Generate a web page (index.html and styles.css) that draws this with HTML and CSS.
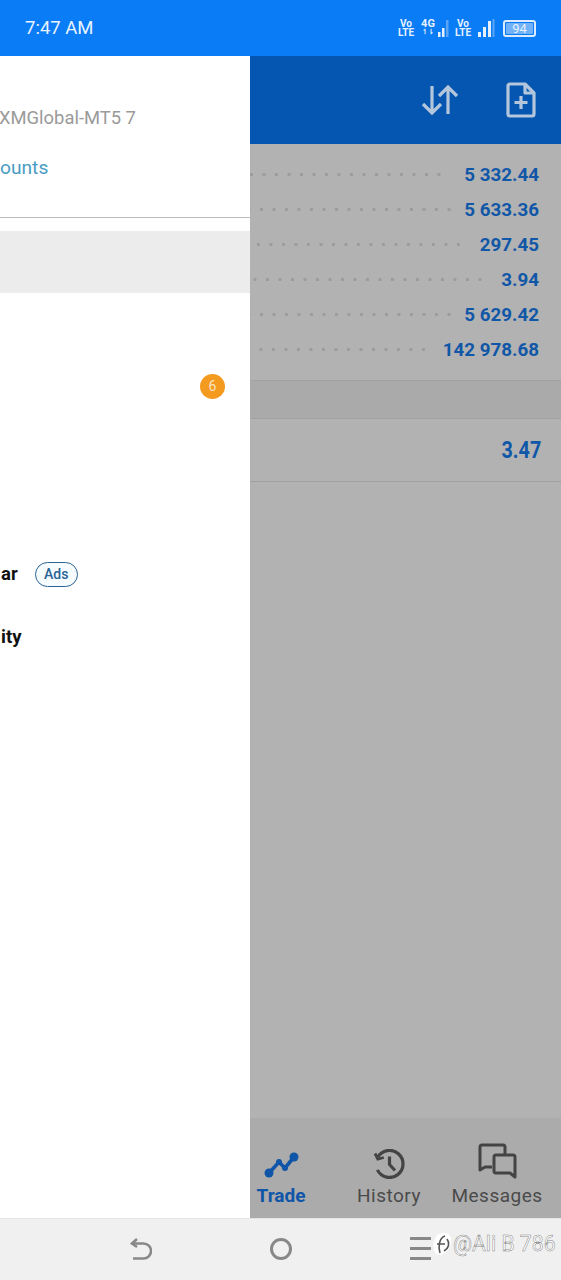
FILE: index.html
```html
<!DOCTYPE html>
<html lang="en">
<head>
    <meta charset="UTF-8">
    <meta name="viewport" content="width=device-width, initial-scale=1.0">
    <title>Trade</title>
    <link rel="stylesheet" href="styles.css">
</head>
<body>
    <div class="status-bar">
        <span class="clock">7:47 AM</span>
        <div class="status-icons">
            <span class="net"><b>Vo</b><b>LTE</b></span>
            <span class="net net-4g"><b>4G</b><b class="updown">↿⇂</b></span>
            <svg class="bars" width="11" height="20" viewBox="0 0 11 20"><path d="M0 14h2.500v5H0zM4 10h2.500v9H4z" fill="#e6f1fe"/><path d="M8 2h2.500v17H8z" fill="#5aa5f5"/></svg>
            <span class="net net-second"><b>Vo</b><b>LTE</b></span>
            <svg class="bars bars-second" width="17" height="20" viewBox="0 0 17 20"><path d="M0 14h3v5H0zM5 9h3v10H5zM10 3h3v16h-3z" fill="#e6f1fe"/><path d="M14.500 1h2v18h-2z" fill="#5aa5f5"/></svg>
            <div class="battery"><span>94</span></div>
        </div>
    </div>

    <div class="main">
        <!-- side menu -->
        <div class="drawer">
            <div class="server-line">XMGlobal-MT5 7</div>
            <div class="accounts-line">ounts</div>
            <div class="menu">
                <div class="menu-item selected"></div>
                <div class="menu-item"></div>
                <div class="menu-item"><span class="badge">6</span></div>
                <div class="menu-item"></div>
                <div class="menu-item"></div>
                <div class="menu-item"><span class="menu-label">ar</span><span class="ads">Ads</span></div>
                <div class="menu-item"><span class="menu-label">ity</span></div>
            </div>
        </div>

        <!-- dimmed page behind the menu -->
        <div class="page">
            <div class="header">
                <svg width="38" height="34" viewBox="0 0 38 34" fill="none" stroke="#b4c6dc" stroke-width="3.2">
                    <path d="M11 3v27M2 21l9 9 9-9"/>
                    <path d="M27 31V4M18 13l9-9 9 9"/>
                </svg>
                <svg width="30" height="36" viewBox="0 0 30 36" fill="none" stroke="#b4c6dc" stroke-width="3.2" stroke-linejoin="round">
                    <path d="M4 2h15l9 9v21a2 2 0 0 1-2 2H4a2 2 0 0 1-2-2V4a2 2 0 0 1 2-2z"/>
                    <path d="M19 2v9h9"/>
                    <path d="M15 14v13M8.500 20.500h13"/>
                </svg>
            </div>
            <div class="list">
                <div class="value-row"><div class="leader"></div><span class="value">5 332.44</span></div>
                <div class="value-row"><div class="leader"></div><span class="value">5 633.36</span></div>
                <div class="value-row"><div class="leader"></div><span class="value">297.45</span></div>
                <div class="value-row"><div class="leader"></div><span class="value">3.94</span></div>
                <div class="value-row"><div class="leader"></div><span class="value">5 629.42</span></div>
                <div class="value-row"><div class="leader"></div><span class="value">142 978.68</span></div>
                <div class="section-band"></div>
                <div class="total-row"><span class="total">3.47</span></div>
            </div>
            <div class="tabs">
                <div class="tab active">
                    <svg width="36" height="30" viewBox="0 0 36 30" fill="none" stroke="#0f55a8" stroke-width="3.600">
                        <path d="M6 24L16 13l6 6L31 8"/>
                        <circle cx="6" cy="24" r="4.500" fill="#0f55a8" stroke="none"/>
                        <circle cx="16" cy="13" r="3" fill="#0f55a8" stroke="none"/>
                        <circle cx="22" cy="19" r="3" fill="#0f55a8" stroke="none"/>
                        <circle cx="31" cy="8" r="4.500" fill="#0f55a8" stroke="none"/>
                    </svg>
                    <span>Trade</span>
                </div>
                <div class="tab">
                    <svg width="36" height="30" viewBox="0 0 36 30" fill="none" stroke="#444" stroke-width="3.200">
                        <path d="M6.800 8.200A13.500 13.500 0 1 1 6.400 20.900"/>
                        <path d="M4 4.500l2.800 5.500 6-1.500" stroke-width="2.800"/>
                        <path d="M18.500 7.500v8l5.500 6"/>
                    </svg>
                    <span>History</span>
                </div>
                <div class="tab">
                    <svg width="40" height="36" viewBox="0 0 40 36" fill="none" stroke="#444" stroke-width="3" stroke-linejoin="round">
                        <path d="M15 24H8l-5 3V4a2 2 0 0 1 2-2h21a2 2 0 0 1 2 2v8"/>
                        <path d="M19 12h17a2 2 0 0 1 2 2v20l-5-4H19a2 2 0 0 1-2-2V14a2 2 0 0 1 2-2z"/>
                    </svg>
                    <span>Messages</span>
                </div>
            </div>
        </div>
    </div>

    <div class="nav-bar">
        <svg width="22" height="24" viewBox="0 0 22 24" fill="none" stroke="#888" stroke-width="2.600">
            <path d="M7 2L2 6.500 7 10"/>
            <path d="M2.500 6.500h11a6.500 6.500 0 0 1 0 15H3"/>
        </svg>
        <div class="home-btn"></div>
        <div class="menu-btn"><i></i><i></i><i></i></div>
    </div>

    <div class="watermark">
        <svg width="20" height="24" viewBox="0 0 20 24" fill="none" stroke="#555" stroke-width="1.600">
            <path d="M2 18C0 11 3 2 10 1c6-1 10 3 9 10-1 6-6 12-12 12-2 0-4-2-5-5z" fill="#fff" stroke="none"/>
            <path d="M8 21C6 15 7 6 13 4M5 12h8"/>
            <path d="M15 7c3 4 2 9-3 12"/>
        </svg>
        <span>@Ali B 786</span>
    </div>
</body>
</html>
```

FILE: styles.css
```css
body {
    font-family: Roboto, "Liberation Sans", sans-serif;
    background-color: #f0f0f0;
    margin: 0;
    padding: 0;
    width: 561px;
    height: 1280px;
    overflow: hidden;
    position: relative;
}
.status-bar {
    height: 56px;
    background-color: #0a7cf6;
    color: #fff;
    display: flex;
    justify-content: space-between;
    align-items: center;
    padding: 0 25px 0 25px;
    box-sizing: border-box;
}
.clock {
    font-size: 18.500px;
    color: #e9f3fe;
}
.status-icons {
    display: flex;
    align-items: center;
}
.net {
    display: flex;
    flex-direction: column;
    align-items: center;
    font-size: 10px;
    line-height: 9.500px;
    width: 16px;
    color: #e6f1fe;
}
.net b {
    font-weight: 700;
}
.net-4g {
    margin-left: 6px;
    font-size: 11px;
}
.updown {
    font-size: 7px;
}
.bars {
    margin-left: 2px;
}
.net-second {
    margin-left: 6px;
}
.bars-second {
    margin-left: 7px;
}
.battery {
    margin-left: 8px;
    width: 33px;
    height: 17px;
    border: 2px solid #dcecfe;
    border-radius: 3px;
    box-sizing: border-box;
    padding: 1px;
    display: flex;
}
.battery span {
    flex: 1;
    background-color: #6fb2f8;
    border-radius: 1px;
    font-size: 13px;
    line-height: 11px;
    text-align: center;
    color: #e6f1fe;
}
.main {
    height: 1162px;
    display: flex;
}
.drawer {
    width: 250px;
    flex-shrink: 0;
    background-color: #fff;
    overflow: hidden;
}
.server-line, .accounts-line {
    white-space: nowrap;
    height: 22px;
    line-height: 22px;
}
.server-line {
    margin-top: 51px;
    margin-left: -1px;
    font-size: 18.400px;
    color: #9a9a9a;
}
.accounts-line {
    margin-top: 28px;
    font-size: 19.200px;
    color: #4a9cc4;
}
.menu {
    margin-top: 38px;
    border-top: 1px solid #bbb;
    padding-top: 13px;
    display: grid;
    grid-template-rows: 62px;
    grid-auto-rows: 62.500px;
}
.menu-item {
    display: flex;
    align-items: center;
}
.selected {
    background-color: #ececec;
}
.badge {
    margin-left: 200px;
    width: 25px;
    height: 25px;
    border-radius: 50%;
    background-color: #f39a1f;
    color: #fbe3c0;
    font-size: 14px;
    line-height: 25px;
    text-align: center;
}
.menu-label {
    padding-left: 1px;
    font-size: 18.500px;
    font-weight: 700;
    color: #111;
}
.ads {
    margin-left: 17px;
    width: 43px;
    height: 25px;
    border: 1.500px solid #2a6496;
    border-radius: 13px;
    box-sizing: border-box;
    font-size: 14px;
    font-weight: 500;
    line-height: 22px;
    text-align: center;
    color: #2a6496;
    background-color: #f6fbfe;
}
.page {
    flex: 1;
    min-width: 0;
    display: flex;
    flex-direction: column;
    background-color: #b2b2b2;
}
.header {
    height: 88px;
    background-color: #0456b0;
    display: flex;
    align-items: center;
    justify-content: flex-end;
    padding-right: 25px;
    gap: 47px;
}
.list {
    flex: 1;
    padding-top: 13px;
}
.value-row {
    height: 35px;
    display: flex;
    align-items: center;
    padding-right: 22px;
}
.leader {
    flex: 1;
    height: 5px;
    margin-right: 15px;
    background-image: radial-gradient(circle, #9c9c9c 1.500px, transparent 2px);
    background-size: 12.500px 5px;
    background-position: right center;
}
.value-row:nth-child(1) .leader {
    margin-right: 19px;
}
.value-row:nth-child(2) .leader, .value-row:nth-child(5) .leader {
    margin-right: 9px;
}
.value-row:nth-child(6) .leader {
    margin-right: 13px;
}
.value {
    font-size: 18.800px;
    font-weight: 700;
    color: #1157a8;
}
.section-band {
    margin-top: 13px;
    height: 37px;
    background-color: #aaaaaa;
    border-top: 1px solid #a2a2a2;
    border-bottom: 1px solid #a2a2a2;
}
.total-row {
    height: 62px;
    border-bottom: 1px solid #a0a0a0;
    display: flex;
    align-items: center;
    justify-content: flex-end;
    padding-right: 20px;
}
.total {
    font-size: 23px;
    font-weight: 700;
    color: #1157a8;
    transform: scaleX(0.86);
    transform-origin: right center;
}
.tabs {
    height: 100px;
    background-color: #ababab;
    display: flex;
    justify-content: flex-end;
    padding-right: 10px;
    overflow: hidden;
}
.tab {
    width: 108px;
    flex-shrink: 0;
    display: flex;
    flex-direction: column;
    align-items: center;
    justify-content: flex-end;
    padding-bottom: 11px;
    box-sizing: border-box;
    font-size: 19px;
    letter-spacing: 0.5px;
    color: #4a4a4a;
}
.tab svg {
    margin-bottom: 5px;
}
.tab.active {
    color: #0f55a8;
    font-weight: 700;
    letter-spacing: 0;
}
.nav-bar {
    height: 62px;
    background-color: #f0f0f0;
    border-top: 1px solid #e4e4e4;
    box-sizing: border-box;
    display: flex;
    align-items: center;
    justify-content: center;
    gap: 118px;
    padding-bottom: 2px;
}
.home-btn {
    width: 22px;
    height: 22px;
    border: 3px solid #888;
    border-radius: 50%;
    box-sizing: border-box;
}
.menu-btn {
    display: flex;
    flex-direction: column;
    gap: 7px;
}
.menu-btn i {
    display: block;
    width: 21px;
    height: 3px;
    background-color: #888;
}
.watermark {
    position: absolute;
    left: 432px;
    top: 1231px;
    display: flex;
    align-items: center;
    gap: 1px;
    font-size: 21.200px;
    color: #fff;
    -webkit-text-stroke: 0.5px #8a8a8a;
    white-space: nowrap;
}
```
